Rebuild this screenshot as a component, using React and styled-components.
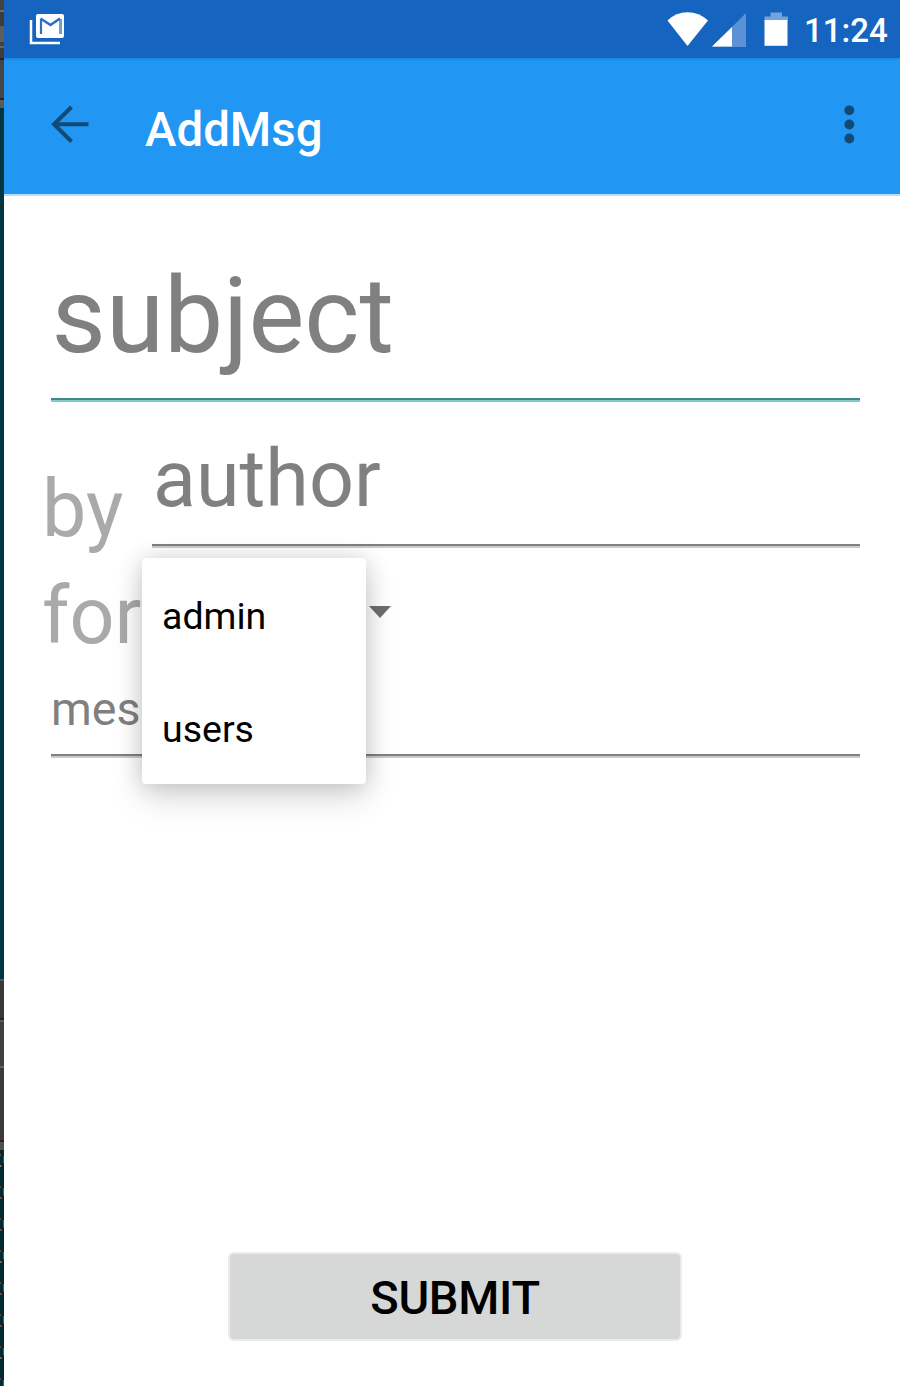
import React from 'react';
import styled, { createGlobalStyle } from 'styled-components';

const Global = createGlobalStyle`
  * { box-sizing: border-box; }
  body { margin: 0; background: #fff; font-family: Roboto, "Liberation Sans", sans-serif; }
`;

const Screen = styled.div`
  display: flex;
  width: 900px;
  height: 1386px;
  overflow: hidden;
`;

const DesktopEdge = styled.div`
  display: flex;
  flex-direction: column;
  flex: 0 0 4px;
`;

const EdgePart = styled.div`
  flex: 0 0 ${(p) => p.$h}px;
  background: ${(p) => p.$c};
`;

const EdgeCode = styled.svg`
  display: block;
  width: 4px;
  flex: 1;
  background: #002b33;
`;

const Phone = styled.main`
  position: relative;
  display: flex;
  flex-direction: column;
  flex: 1;
  background: #fff;
`;

const StatusBar = styled.header`
  display: flex;
  align-items: flex-start;
  height: 58px;
  background: #1565c0;
  color: #fff;
`;

const MailIcon = styled.svg`
  width: 36px;
  height: 34px;
  margin: 13px auto 0 25px;
`;

const WifiIcon = styled.svg`
  width: 42px;
  height: 36px;
  margin-top: 11px;
`;

const SignalIcon = styled.svg`
  width: 36px;
  height: 36px;
  margin: 12px 0 0 2px;
`;

const BatteryIcon = styled.svg`
  width: 24px;
  height: 36px;
  margin: 11px 16px 0 17px;
`;

const Clock = styled.time`
  width: 96px;
  padding-top: 11px;
  font-size: 33px;
  font-weight: 500;
  line-height: 40px;
`;

const AppBar = styled.nav`
  display: flex;
  height: 138px;
  background: #2196f3;
  border-top: 2px solid #1e8ae6;
  border-bottom: 2px solid #bbdffb;
`;

const BackIcon = styled.svg`
  width: 40px;
  height: 40px;
  margin: 45px 0 0 46px;
`;

const Title = styled.h1`
  flex: 1;
  margin: 0 0 0 55px;
  padding-top: 42px;
  font-size: 47.4px;
  font-weight: 500;
  line-height: 56px;
  color: #fff;
`;

const MoreIcon = styled.svg`
  width: 12px;
  height: 42px;
  margin: 44px 45px 0 0;
`;

const Form = styled.section`
  display: flex;
  flex-direction: column;
  flex: 1;
  padding: 58px 40px 45px 37px;
`;

const Row = styled.div`
  display: flex;
  align-items: flex-start;
  margin-top: ${(p) => p.$top}px;
`;

const Field = styled.div`
  flex: 1;
  margin-left: ${(p) => p.$left || 0}px;
  padding: 0 0 ${(p) => p.$gap}px ${(p) => p.$inset || 0}px;
  border-bottom: 2px solid ${(p) => (p.$active ? '#3d8c84' : '#808080')};
  box-shadow: 0 2px 0 ${(p) => (p.$active ? '#80cbc4' : '#cacaca')};
  font-size: ${(p) => p.$size}px;
  line-height: ${(p) => p.$line}px;
  color: #808080;
`;

const Label = styled.label`
  width: ${(p) => p.$w}px;
  margin-top: ${(p) => p.$drop || 0}px;
  padding-left: 1px;
  font-size: 79px;
  line-height: 92px;
  color: #aaa;
`;

const Caret = styled.svg`
  width: 22px;
  height: 12px;
  margin: 36px 0 0 auto;
`;

const Spinner = styled.div`
  display: flex;
  width: 239px;
`;

const Submit = styled.button`
  align-self: center;
  width: 454px;
  height: 89px;
  margin: auto 0 0 9px;
  padding: 2px 0 0;
  border: 2px solid #ebebeb;
  border-radius: 6px;
  background: #d6d7d7;
  font-family: inherit;
  font-size: 47px;
  font-weight: 500;
  line-height: 56px;
  letter-spacing: -0.3px;
  color: #000;
`;

const Menu = styled.ul`
  position: absolute;
  top: 558px;
  left: 138px;
  width: 224px;
  margin: 0;
  padding: 0;
  list-style: none;
  border-radius: 4px;
  background: #fff;
  box-shadow: 0 14px 32px rgba(0, 0, 0, 0.15), 0 0 22px rgba(0, 0, 0, 0.15);
`;

const MenuItem = styled.li`
  height: 113px;
  padding: 3px 0 0 20px;
  font-size: 37.5px;
  line-height: 110px;
  color: #000;
`;

const edgeTop = [
  [10, '#444443'], [2, '#6b6b6b'], [14, '#3d3d3d'], [16, '#5e5e5e'], [4, '#414141'],
  [2, '#686868'], [10, '#3d3d3d'], [2, '#242424'], [38, '#464646'], [2, '#242424'],
  [8, '#5b5b57'], [871, '#003641'], [2, '#555553'], [37, '#393837'], [2, '#242424'],
  [2, '#5b5b58'], [44, '#403f3e'], [2, '#62625f'], [72, '#3b3a38'], [2, '#222'],
  [8, '#51514d'],
];

const codeMarks = Array.from({ length: 8 }, (_, i) => i * 32);

export default function App() {
  return (
    <Screen>
      <Global />
      <DesktopEdge>
        {edgeTop.map(([h, c], i) => <EdgePart key={i} $h={h} $c={c} />)}
        <EdgeCode viewBox="0 0 4 236">
          {codeMarks.map((y, i) => (
            <g key={y}>
              <path d={`M0 ${y + 4}h1v2h-1z`} fill="#744447" />
              <path d={`M0 ${y + 15}h1.5v2h-1.5z`} fill={i % 3 === 0 ? '#a56548' : '#a5422d'} />
              <path d={`M3 ${y + 6}h1v7h-1z`} fill={i === 0 ? '#334b83' : '#62601b'} />
            </g>
          ))}
        </EdgeCode>
      </DesktopEdge>
      <Phone>
        <StatusBar>
          <MailIcon viewBox="29 13 36 34">
            <path d="M31 20v23h29" fill="none" stroke="#fff" strokeWidth="2.5" />
            <rect x="36" y="14" width="28" height="24" rx="2" fill="#fff" />
            <path d="M41 34V19" fill="none" stroke="#2b70c6" strokeWidth="2.2" />
            <path d="M60.500 34V19" fill="none" stroke="#6d9fd9" strokeWidth="3" />
            <path d="M40.500 18.500l10 6.500 9.500-6.500" fill="none" stroke="#2b70c6" strokeWidth="2.6" />
          </MailIcon>
          <WifiIcon viewBox="667 11 42 36">
            <path d="M667.5 20.5Q676 12.3 687.5 12.3T708 20.5L687.5 46z" fill="#fff" />
          </WifiIcon>
          <SignalIcon viewBox="711 12 36 36">
            <path d="M712 47L746 13v34z" fill="#5b92d5" />
            <path d="M712 46.5L732 27v19.5z" fill="#fff" />
          </SignalIcon>
          <BatteryIcon viewBox="764 11 24 36">
            <path d="M764.500 20.500v-4h6v-4h11.500v4h6v4z" fill="#73a3dc" />
            <path d="M764.5 20h23v25.800h-23z" fill="#fff" />
          </BatteryIcon>
          <Clock>11:24</Clock>
        </StatusBar>
        <AppBar>
          <BackIcon viewBox="50 105 40 40">
            <path d="M88.500 124.300H54M71.500 107L54 124.300l17.500 17.200" fill="none" stroke="#124a76" strokeWidth="4" />
          </BackIcon>
          <Title>AddMsg</Title>
          <MoreIcon viewBox="843 104 12 42">
            <circle cx="849.300" cy="110.300" r="4.900" fill="#124a76" />
            <circle cx="849.300" cy="124.500" r="4.900" fill="#124a76" />
            <circle cx="849.300" cy="138.500" r="4.900" fill="#124a76" />
          </MoreIcon>
        </AppBar>
        <Form>
          <Row $top={0}>
            <Field $active $left={10} $inset={0.5} $size={105.4} $line={124} $gap={20}>subject</Field>
          </Row>
          <Row $top={33}>
            <Label $w={111} $drop={30}>by</Label>
            <Field $inset={1} $size={79} $line={92} $gap={19}>author</Field>
          </Row>
          <Row $top={15}>
            <Label $w={111}>for</Label>
            <Spinner>
              <Caret viewBox="0 0 22 12"><path d="M0 0h22L11 12z" fill="#6f6f6f" /></Caret>
            </Spinner>
          </Row>
          <Row $top={20}>
            <Field $left={10} $size={46.5} $line={54} $gap={18}>mes</Field>
          </Row>
          <Submit type="button">SUBMIT</Submit>
        </Form>
        <Menu>
          <MenuItem>admin</MenuItem>
          <MenuItem>users</MenuItem>
        </Menu>
      </Phone>
    </Screen>
  );
}
